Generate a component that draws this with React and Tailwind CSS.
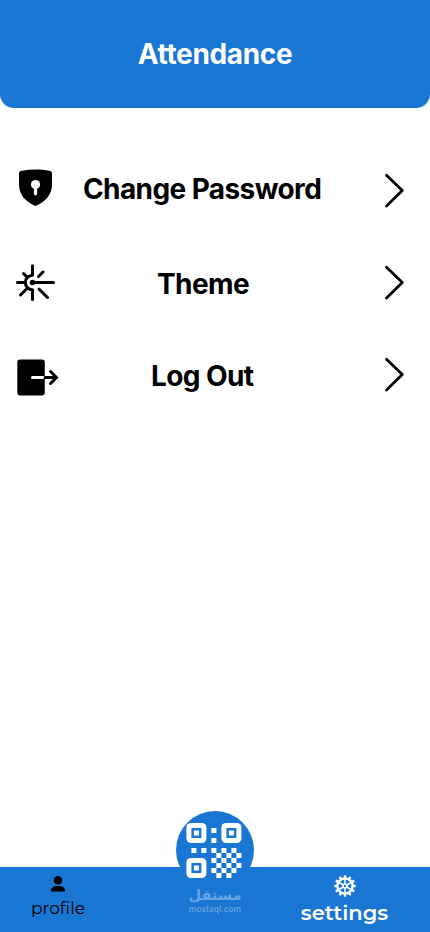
import React from "react";

// ---------------------------------------------
// Settings Page
// Header, list of settings rows and the bottom
// navigation with the QR scan button.
// ---------------------------------------------

const ShieldIcon = () => (
  <svg width="34" height="38" viewBox="0 0 34 38" className="absolute left-[19px] top-[18px]">
    <path
      d="M0 4.5C0 2.8 1 2 3 1.7C12 0.2 22 0.2 30 1.7C32 2 33 2.8 33 4.5V16C33 25 26.5 33 16.5 37C6.5 33 0 25 0 16Z"
      fill="black"
    />
    <circle cx="16.5" cy="15.5" r="4.6" fill="white" />
    <path d="M16.5 17V24.8" stroke="white" strokeWidth="3.2" strokeLinecap="round" />
  </svg>
);

const ThemeIcon = () => (
  <svg
    width="40"
    height="38"
    viewBox="0 0 40 38"
    fill="none"
    stroke="black"
    strokeWidth="3"
    strokeLinecap="round"
    className="absolute left-4 top-[18px]"
  >
    <path d="M16.5 1.7V11.3A7.2 7.2 0 0 0 16.5 25.7V35.5" strokeLinejoin="round" />
    <path d="M1.5 18.5H8.5M16.5 18.5H37.5M7.5 9.5L11 13M11 24.5L4.5 31M22.5 12.5L27 8M23 25L31.5 33.5" />
    <circle cx="16.5" cy="18.5" r="2.8" fill="black" stroke="none" />
  </svg>
);

const LogOutIcon = () => (
  <svg width="42" height="38" viewBox="0 0 42 38" fill="none" className="absolute left-[17px] top-[21px]">
    <rect x="0.3" y="0.4" width="27.5" height="36" rx="2.8" fill="black" />
    <path d="M15.5 18.5H27.5" stroke="white" strokeWidth="3" strokeLinecap="round" />
    <path
      d="M28 18.5H39.5M33.5 12.5L39.5 18.5L33.5 24.5"
      stroke="black"
      strokeWidth="3"
      strokeLinecap="round"
    />
  </svg>
);

const rows = [
  { title: "Change Password", Icon: ShieldIcon, style: "h-[95px] pl-[83px]", arrow: "top-[21px]" },
  { title: "Theme", Icon: ThemeIcon, style: "h-[92px] pl-[157px]", arrow: "top-[18px]" },
  { title: "Log Out", Icon: LogOutIcon, style: "h-[92px] pl-[151px]", arrow: "top-[18px]" },
];

// Filled modules outside the three corner squares, [column, row]
const modules = [
  [5, 1], [5, 3], [1, 5], [3, 5], [5, 5], [7, 5], [9, 5],
  [6, 6], [8, 6], [10, 6], [5, 7], [7, 7], [9, 7],
  [6, 8], [8, 8], [10, 8], [5, 9], [7, 9], [9, 9],
  [6, 10], [8, 10],
];

const corners = [[0, 0], [35, 0], [0, 35]];

const QrIcon = () => (
  <svg width="56" height="55" viewBox="-0.4 0 56 55" fill="white">
    {corners.map(([x, y]) => (
      <g key={`${x}-${y}`}>
        <rect x={x} y={y} width="20" height="20" rx="4.5" />
        <rect x={x + 5} y={y + 5} width="10" height="10" rx="0.5" fill="#1976d2" />
        <rect x={x + 7.5} y={y + 7.5} width="5" height="5" />
      </g>
    ))}
    {modules.map(([c, r]) => (
      <rect key={`${c}-${r}`} x={c * 5} y={r * 5} width="5" height="5" />
    ))}
  </svg>
);

const angles = [0, 30, 60, 90, 120, 150, 180, 210, 240, 270, 300, 330];
const spokes = [0, 60, 120, 180, 240, 300];

const GearIcon = () => (
  <svg width="22" height="22" viewBox="-11 -11 22 22" stroke="white" fill="none">
    <circle r="7.6" strokeWidth="2.4" />
    {angles.map((a) => (
      <path key={a} d="M0 -8V-10.7" strokeWidth="2.4" transform={`rotate(${a})`} />
    ))}
    {spokes.map((a) => (
      <path key={a} d="M0 -2V-7.5" strokeWidth="1.5" transform={`rotate(${a})`} />
    ))}
    <circle r="1.9" strokeWidth="1.5" />
  </svg>
);

export default function App() {
  return (
    <div className="flex h-[932px] w-[430px] flex-col overflow-hidden bg-white font-['Inter',sans-serif] text-black">
      <header className="flex h-[108px] shrink-0 items-center justify-center rounded-b-[14px] bg-[#1976d2]">
        <h1 className="text-[28px] font-bold leading-none tracking-[-0.35px] text-white">Attendance</h1>
      </header>

      <main className="flex-1 pt-[43px]">
        {rows.map(({ title, Icon, style, arrow }) => (
          <div key={title} className={`relative ${style}`}>
            <Icon />
            <span className="block whitespace-nowrap pt-6 text-[28px] font-bold leading-[28px] tracking-[-0.6px]">
              {title}
            </span>
            <svg
              width="22"
              height="36"
              viewBox="0 0 22 36"
              fill="none"
              stroke="black"
              strokeWidth="2.8"
              strokeLinecap="round"
              strokeLinejoin="round"
              className={`absolute left-[384px] ${arrow}`}
            >
              <path d="M2.5 3.3L18.3 18.5L2.5 34" />
            </svg>
          </div>
        ))}
      </main>

      <nav className="relative flex h-[65px] shrink-0 justify-between bg-[#1976d2] font-['Montserrat',sans-serif]">
        <div className="flex w-[116px] flex-col items-center pt-[9px]">
          <svg width="16" height="16" viewBox="0 0 16 16" fill="black">
            <circle cx="8" cy="4.2" r="4.2" />
            <path d="M1 15.5C0.5 12 3 10 8 10S15.5 12 15 15.5Z" />
          </svg>
          <span className="text-[17px] leading-[32px]">profile</span>
        </div>

        <div className="absolute left-[176px] top-[-56px] flex size-[78px] rounded-full bg-[#1976d2] pl-[10px] pt-3">
          <QrIcon />
        </div>
        <div className="absolute left-[175px] top-[19px] w-20 text-center text-white/35">
          <p className="font-['DejaVu_Sans',sans-serif] text-[14.5px] font-bold leading-[18px]" dir="rtl">
            مستقل
          </p>
          <p className="mt-px font-['Roboto',sans-serif] text-[8.5px] font-medium leading-[9px] tracking-[0.2px]">
            mostaql.com
          </p>
        </div>

        <div className="flex w-[171px] flex-col items-center pt-[8px] text-white">
          <GearIcon />
          <span className="text-[21px] font-semibold leading-[32px]">settings</span>
        </div>
      </nav>
    </div>
  );
}
